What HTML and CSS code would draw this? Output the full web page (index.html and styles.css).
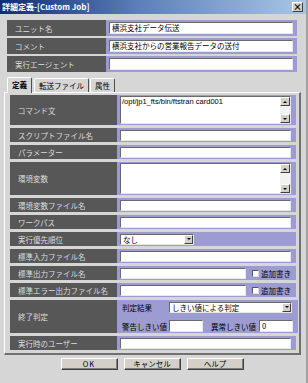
FILE: index.html
```html
<!DOCTYPE html>
<html lang="ja">
<head>
<meta charset="utf-8">
<link rel="stylesheet" href="styles.css">
</head>
<body>
<div class="window">
  <div class="titlebar">
    <span class="title">詳細定義-[Custom Job]</span>
    <span class="close">×</span>
  </div>
  <div class="top">
    <div class="row"><div class="label">ユニット名</div><div class="value"><div class="input">横浜支社データ伝送</div></div></div>
    <div class="row"><div class="label">コメント</div><div class="value"><div class="input">横浜支社からの営業報告データの送付</div></div></div>
    <div class="row"><div class="label">実行エージェント</div><div class="value"><div class="input"></div></div></div>
  </div>
  <div class="tabs">
    <div class="tab active">定義</div>
    <div class="tab">転送ファイル</div>
    <div class="tab">属性</div>
  </div>
  <div class="panel">
    <div class="prow tall30"><div class="label">コマンド文</div><div class="value va-top"><div class="textarea"><span class="tatext">/opt/jp1_fts/bin/ftstran card001</span><div class="vscroll"><span class="sbtn"><i class="up"></i></span><span class="sbtn"><i class="down"></i></span></div></div></div></div>
    <div class="prow"><div class="label">スクリプトファイル名</div><div class="value"><div class="input"></div></div></div>
    <div class="prow"><div class="label">パラメーター</div><div class="value"><div class="input"></div></div></div>
    <div class="prow tall33"><div class="label">環境変数</div><div class="value va-top"><div class="textarea"><span class="tatext"></span><div class="vscroll"><span class="sbtn"><i class="up"></i></span><span class="sbtn"><i class="down"></i></span></div></div></div></div>
    <div class="prow"><div class="label">環境変数ファイル名</div><div class="value"><div class="input"></div></div></div>
    <div class="prow"><div class="label">ワークパス</div><div class="value"><div class="input"></div></div></div>
    <div class="prow"><div class="label">実行優先順位</div><div class="value"><div class="select sel-short"><span class="seltext">なし</span><span class="dd"><i class="down"></i></span></div></div></div>
    <div class="prow"><div class="label">標準入力ファイル名</div><div class="value"><div class="input"></div></div></div>
    <div class="prow"><div class="label">標準出力ファイル名</div><div class="value"><div class="input"></div><span class="check"></span><span class="checklabel">追加書き</span></div></div>
    <div class="prow"><div class="label">標準エラー出力ファイル名</div><div class="value"><div class="input"></div><span class="check"></span><span class="checklabel">追加書き</span></div></div>
    <div class="prow tall33"><div class="label">終了判定</div>
      <div class="value judge">
        <div class="jline">
          <span class="jlabel">判定結果</span>
          <div class="select sel-long"><span class="seltext">しきい値による判定</span><span class="dd"><i class="down"></i></span></div>
        </div>
        <div class="jline">
          <span class="jlabel">警告しきい値</span>
          <div class="input small"></div>
          <span class="jlabel2">異常しきい値</span>
          <div class="input small">0</div>
        </div>
      </div>
    </div>
    <div class="prow"><div class="label">実行時のユーザー</div><div class="value"><div class="input"></div></div></div>
  </div>
  <div class="buttons">
    <div class="btn ok">OK</div>
    <div class="btn">キャンセル</div>
    <div class="btn">ヘルプ</div>
  </div>
</div>
</body>
</html>
```

FILE: styles.css
```css
* { box-sizing: border-box; }
html, body { margin: 0; padding: 0; }
body {
  font-family: "Noto Sans CJK JP", "Noto Sans", sans-serif;
  font-size: 7.5px;
  background: #d6d6d6;
}
.window {
  width: 308px;
  height: 383px;
  background: #d6d6d6;
  border-right: 2px solid #a0a0a0;
  overflow: hidden;
}
.titlebar {
  height: 14px;
  background: linear-gradient(to right, #0f2c74 0%, #5b7fb8 45%, #a9c6e6 100%);
  display: flex;
  align-items: center;
  justify-content: space-between;
  padding: 0 3px 0 2px;
}
.title {
  color: #fff;
  font-weight: bold;
  font-size: 8px;
  line-height: 14px;
}
.close {
  width: 11px;
  height: 10px;
  background: #d4d0c8;
  border-top: 1px solid #fff;
  border-left: 1px solid #fff;
  border-right: 1px solid #404040;
  border-bottom: 1px solid #404040;
  font-size: 9px;
  font-weight: bold;
  line-height: 8px;
  text-align: center;
  color: #000;
}
.top {
  padding: 6px 9px 0 7px;
  display: flex;
  flex-direction: column;
  gap: 2px;
}
.row {
  display: grid;
  grid-template-columns: 99px 1fr;
  height: 16px;
}
.label {
  background: #575757;
  color: #dcdcdc;
  padding-left: 8px;
  display: flex;
  align-items: center;
  white-space: nowrap;
  font-size: 7.5px;
}
.value {
  background: #9c9cd2;
  display: flex;
  align-items: center;
  padding: 1px 4px 1px 3px;
}
.input {
  flex: 1;
  height: 12px;
  background: #fff;
  border-top: 1px solid #6a6a6a;
  border-left: 1px solid #6a6a6a;
  border-right: 1px solid #e8e8e8;
  border-bottom: 1px solid #e8e8e8;
  padding-left: 2px;
  line-height: 10px;
  font-size: 7.5px;
  color: #000;
  white-space: nowrap;
  overflow: hidden;
}
.tabs {
  display: flex;
  padding-left: 7px;
  margin-top: 5px;
  height: 15px;
  align-items: flex-end;
  position: relative;
  z-index: 1;
}
.tab {
  height: 14px;
  padding: 0 4px;
  border-top: 1px solid #fff;
  border-left: 1px solid #fff;
  border-right: 1px solid #505050;
  border-radius: 2px 2px 0 0;
  font-size: 7.5px;
  line-height: 13px;
  color: #000;
  margin-right: 1px;
}
.tab.active {
  height: 16px;
  font-weight: bold;
  background: #d6d6d6;
  margin-bottom: -1px;
  margin-right: 2px;
}
.panel {
  margin: 0 5px 0 4px;
  border-top: 1px solid #fff;
  border-left: 1px solid #fff;
  border-right: 2px solid #707070;
  border-bottom: 2px solid #707070;
  padding: 2px 3px 3px 5px;
  display: flex;
  flex-direction: column;
  gap: 3px;
  height: 263px;
}
.prow {
  display: grid;
  grid-template-columns: 107px 1fr;
  height: 14px;
}
.prow.tall30 { height: 30px; }
.prow.tall33 { height: 33px; }
.prow .value {
  padding: 1px 5px 1px 3px;
}
.prow .input { height: 11px; }
.va-top { align-items: stretch; }
.textarea {
  flex: 1;
  background: #fff;
  border-top: 1px solid #6a6a6a;
  border-left: 1px solid #6a6a6a;
  border-right: 1px solid #e8e8e8;
  border-bottom: 1px solid #e8e8e8;
  display: flex;
  justify-content: space-between;
}
.tatext {
  font-family: "Liberation Sans", "Noto Sans", sans-serif;
  font-size: 7.5px;
  line-height: 9px;
  padding-left: 1px;
  white-space: nowrap;
}
.vscroll {
  width: 10px;
  background: #f2f2f2;
  display: flex;
  flex-direction: column;
  justify-content: space-between;
}
.sbtn, .dd {
  width: 10px;
  height: 9px;
  background: #d4d0c8;
  border-top: 1px solid #fff;
  border-left: 1px solid #fff;
  border-right: 1px solid #404040;
  border-bottom: 1px solid #404040;
  display: flex;
  align-items: center;
  justify-content: center;
}
i.up, i.down {
  display: block;
  width: 0;
  height: 0;
  border-left: 2px solid transparent;
  border-right: 2px solid transparent;
}
i.up { border-bottom: 2px solid #000; }
i.down { border-top: 2px solid #000; }
.select {
  height: 11px;
  background: #fff;
  border-top: 1px solid #6a6a6a;
  border-left: 1px solid #6a6a6a;
  border-right: 1px solid #e8e8e8;
  border-bottom: 1px solid #e8e8e8;
  display: flex;
  align-items: center;
  justify-content: space-between;
}
.sel-short { width: 74px; }
.sel-long { width: 123px; }
.seltext {
  padding-left: 2px;
  font-size: 7.5px;
  line-height: 9px;
  white-space: nowrap;
}
.select .dd { width: 9px; height: 9px; }
.check {
  width: 7px;
  height: 7px;
  background: #fff;
  border-top: 1px solid #555;
  border-left: 1px solid #555;
  border-right: 1px solid #ddd;
  border-bottom: 1px solid #ddd;
  margin-left: 6px;
  flex: none;
}
.checklabel {
  margin-left: 2px;
  font-size: 7.5px;
  color: #000;
  white-space: nowrap;
}
.prow .value.judge {
  flex-direction: column;
  align-items: stretch;
  justify-content: space-between;
  padding: 1px 5px 1px 3px;
}
.jline {
  display: flex;
  align-items: center;
  height: 12px;
}
.jlabel {
  width: 49px;
  padding-left: 2px;
  font-size: 7.5px;
  color: #000;
  white-space: nowrap;
  flex: none;
}
.jline .input.small {
  flex: none;
  width: 34px;
  height: 12px;
}
.jlabel2 {
  margin-left: 8px;
  width: 48px;
  font-size: 7.5px;
  white-space: nowrap;
  flex: none;
}
.buttons {
  display: flex;
  justify-content: center;
  gap: 6px;
  margin-top: 3px;
  padding-right: 2px;
}
.btn {
  width: 57px;
  height: 12px;
  background: #d4d0c8;
  border-top: 1px solid #fff;
  border-left: 1px solid #fff;
  border-right: 1px solid #404040;
  border-bottom: 1px solid #404040;
  box-shadow: inset -1px -1px 0 #808080;
  font-size: 7.5px;
  line-height: 10px;
  text-align: center;
  color: #000;
}
.btn.ok { letter-spacing: 1px; }
```
